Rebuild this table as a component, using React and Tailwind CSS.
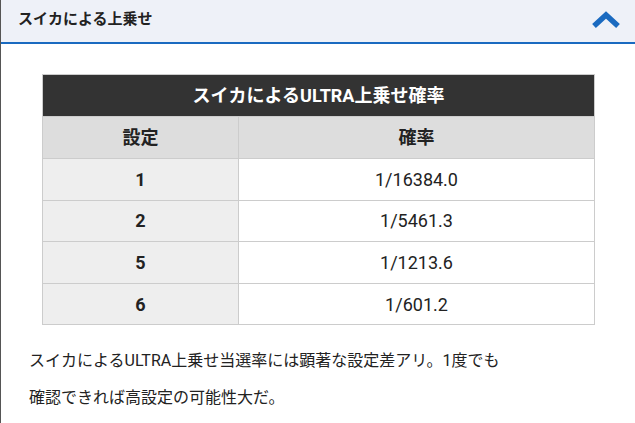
import React from "react";

const ROWS = [
  { setting: "1", rate: "1/16384.0" },
  { setting: "2", rate: "1/5461.3" },
  { setting: "5", rate: "1/1213.6" },
  { setting: "6", rate: "1/601.2" },
];

const FONT = "font-['Roboto','Noto_Sans_CJK_JP',sans-serif]";

export default function App() {
  return (
    <div className={`w-[635px] h-[423px] overflow-hidden bg-white border-l border-[#555] ${FONT}`}>
      {/* accordion header */}
      <div className="h-[44px] flex items-center justify-between pl-[17px] pr-[14px] pb-[3px] bg-[#eef1f8] border-b-2 border-[#1a6ac0]">
        <h2 className="text-[15px] font-bold text-[#222] leading-none">スイカによる上乗せ</h2>
        <svg width="30" height="20" viewBox="0 0 30 20">
          <path d="M3 16 L15 5 L27 16" fill="none" stroke="#1a6ac0" strokeWidth="5.5" strokeLinejoin="miter" />
        </svg>
      </div>

      <div className="pt-[30px] pl-[41px] pr-[40px]">
        <table className="w-full border-collapse text-[18px] text-[#222] border border-[#ccc]">
          <thead>
            <tr>
              <th colSpan={2} className="h-[42px] bg-[#333] text-white font-bold border border-[#ccc]">
                スイカによるULTRA上乗せ確率
              </th>
            </tr>
            <tr>
              <th className="w-[196px] h-[42px] bg-[#ddd] font-bold border border-[#ccc]">設定</th>
              <th className="h-[42px] bg-[#ddd] font-bold border border-[#ccc]">確率</th>
            </tr>
          </thead>
          <tbody>
            {ROWS.map((r) => (
              <tr key={r.setting}>
                <td className="h-[41.6px] bg-[#eee] text-center font-bold border border-[#ccc]">{r.setting}</td>
                <td className="h-[41.6px] bg-white text-center border border-[#ccc]">{r.rate}</td>
              </tr>
            ))}
          </tbody>
        </table>
      </div>

      <p className="mt-[17px] ml-[28px] w-[482px] text-[16px] leading-[37px] text-[#222]">
        スイカによるULTRA上乗せ当選率には顕著な設定差アリ。1度でも確認できれば高設定の可能性大だ。
      </p>
    </div>
  );
}
